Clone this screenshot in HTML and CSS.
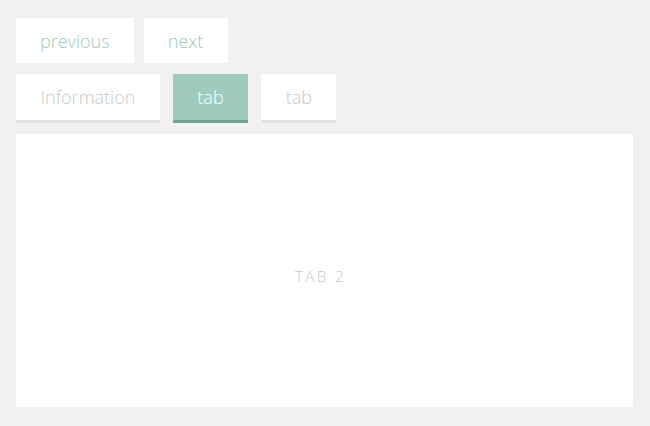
FILE: index.html
```html
<!DOCTYPE html>
<html>
<head>
<meta charset="utf-8">
<link rel="stylesheet" href="styles.css">
</head>
<body>
<div class="page">
  <div class="nav">
    <button class="btn">previous</button>
    <button class="btn">next</button>
  </div>
  <div class="tabs">
    <div class="tab">Information</div>
    <div class="tab active">tab</div>
    <div class="tab">tab</div>
  </div>
  <div class="panel">
    <span class="panel-label">TAB 2</span>
  </div>
</div>
</body>
</html>
```
FILE: styles.css
```css
html, body {
  margin: 0;
  padding: 0;
  background: #f1f1f1;
}
body {
  font-family: "Open Sans", "Liberation Sans", sans-serif;
  font-weight: 300;
}
.page {
  padding: 18px 17px 0 16px;
  display: flex;
  flex-direction: column;
}
.nav {
  display: flex;
  gap: 10px;
}
.btn {
  font-family: inherit;
  font-weight: 300;
  font-size: 18px;
  color: #9fc9bb;
  background: #fff;
  border: none;
  height: 45px;
  min-width: 84px;
  padding: 0 24px;
  margin: 0;
}
.tabs {
  display: flex;
  gap: 13px;
  margin-top: 11px;
}
.tab {
  box-sizing: border-box;
  min-width: 75px;
  text-align: center;
  font-size: 18px;
  color: #c8c8c8;
  background: #fff;
  height: 46px;
  line-height: 46px;
  padding: 0 24.5px;
  box-shadow: 0 3px 0 #e2e2e2;
}
.tab.active {
  background: #9ecbbd;
  color: #fff;
  box-shadow: 0 3px 0 #6fa592;
}
.panel {
  margin-top: 14px;
  background: #fff;
  height: 273px;
  box-shadow: 0 3px 0 #e2e2e2;
  display: flex;
  align-items: center;
  justify-content: center;
}
.panel-label {
  font-size: 15px;
  letter-spacing: 2.5px;
  color: #c8c8c8;
  margin: 10px 8px 0 0;
}
```
